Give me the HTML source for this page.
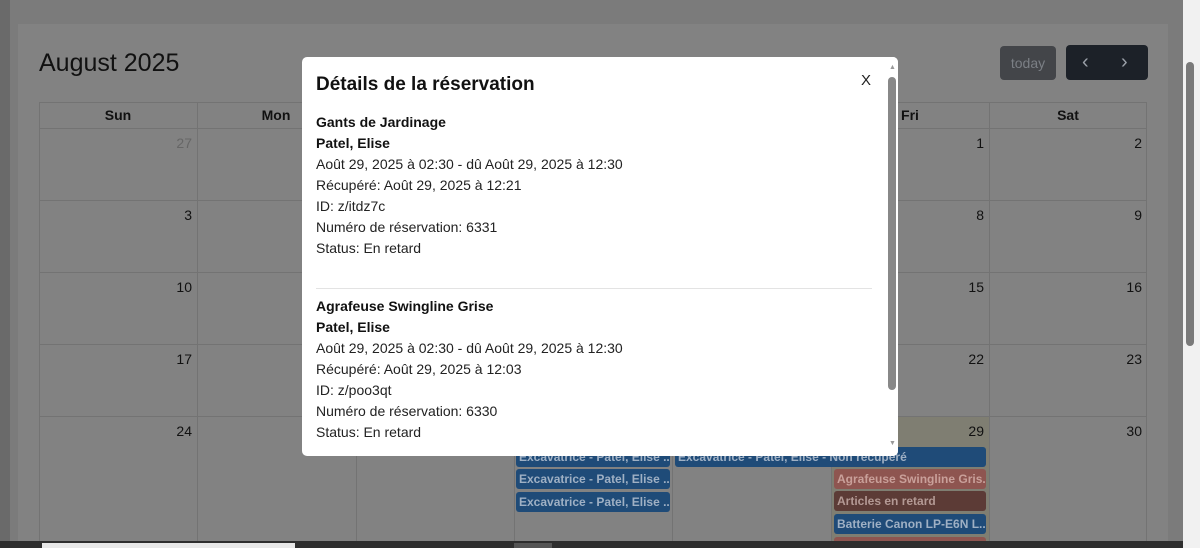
<!DOCTYPE html>
<html><head><meta charset="utf-8"><style>
*{box-sizing:border-box;margin:0;padding:0}
html,body{width:1200px;height:548px;overflow:hidden}
body{background:#7b7b7b;font-family:"Liberation Sans",sans-serif;position:relative}
.abs{position:absolute}
.card{left:18px;top:24px;width:1150px;height:524px;background:#828282}
.grid{left:39px;top:102px;width:1108px;height:446px;border:1px solid #737373}
.vl{position:absolute;top:102px;width:1px;height:446px;background:#737373}
.hl{position:absolute;left:39px;width:1108px;height:1px;background:#737373}
.dh{position:absolute;top:107px;font-size:14px;font-weight:bold;color:#111;text-align:center;width:158px}
.dn{position:absolute;font-size:14px;color:#111;text-align:right;width:150px}
.ev{position:absolute;height:20px;border-radius:3px;color:#9fb0c4;font-size:12px;font-weight:bold;line-height:20px;padding-left:3px;white-space:nowrap;overflow:hidden}
.modal{left:302px;top:57px;width:596px;height:399px;background:#fff;border-radius:5px;overflow:hidden}
.m{position:absolute;left:14px;font-size:14px;color:#222;line-height:21px}
.m b{color:#111}
</style></head><body>
<div class="abs" style="left:0;top:0;width:10px;height:548px;background:#6a6a6a"></div>
<div class="abs card"></div>
<div class="abs" style="left:39px;top:49px;font-size:25px;color:#111">August 2025</div>
<div class="abs" style="left:1000px;top:46px;width:56px;height:34px;background:#434549;border-radius:4px;color:#7b7f85;font-size:14px;line-height:34px;text-align:center">today</div>
<div class="abs" style="left:1066px;top:45px;width:82px;height:35px;background:#1c2128;border-radius:4px;color:#9aa0a8;font-size:20px;line-height:34px"><span class="abs" style="left:16px">‹</span><span class="abs" style="left:55px">›</span></div>
<div class="abs grid"></div>
<div class="vl" style="left:197px"></div><div class="vl" style="left:356px"></div><div class="vl" style="left:514px"></div><div class="vl" style="left:672px"></div><div class="vl" style="left:831px"></div><div class="vl" style="left:989px"></div>
<div class="hl" style="top:128px"></div><div class="hl" style="top:200px"></div><div class="hl" style="top:272px"></div><div class="hl" style="top:344px"></div><div class="hl" style="top:416px"></div>
<div class="abs" style="left:832px;top:417px;width:157px;height:131px;background:#7f7e72"></div>
<div class="dh" style="left:39px">Sun</div><div class="dh" style="left:197px">Mon</div><div class="dh" style="left:831px">Fri</div><div class="dh" style="left:989px">Sat</div>
<div class="dn" style="left:42px;top:135px;color:#666">27</div>
<div class="dn" style="left:42px;top:207px">3</div><div class="dn" style="left:42px;top:279px">10</div><div class="dn" style="left:42px;top:351px">17</div><div class="dn" style="left:42px;top:423px">24</div>
<div class="dn" style="left:834px;top:135px">1</div><div class="dn" style="left:834px;top:207px">8</div><div class="dn" style="left:834px;top:279px">15</div><div class="dn" style="left:834px;top:351px">22</div><div class="dn" style="left:834px;top:423px">29</div>
<div class="dn" style="left:992px;top:135px">2</div><div class="dn" style="left:992px;top:207px">9</div><div class="dn" style="left:992px;top:279px">16</div><div class="dn" style="left:992px;top:351px">23</div><div class="dn" style="left:992px;top:423px">30</div>
<div class="ev" style="left:516px;top:447px;width:154px;background:#1f4b78">Excavatrice - Patel, Elise ...</div>
<div class="ev" style="left:516px;top:469px;width:154px;background:#1f4b78">Excavatrice - Patel, Elise ...</div>
<div class="ev" style="left:516px;top:492px;width:154px;background:#1f4b78">Excavatrice - Patel, Elise ...</div>
<div class="ev" style="left:675px;top:447px;width:311px;background:#1f4b78">Excavatrice - Patel, Elise - Non récupéré</div>
<div class="ev" style="left:834px;top:469px;width:152px;background:#8e5550;color:#c9a09a">Agrafeuse Swingline Gris...</div>
<div class="ev" style="left:834px;top:491px;width:152px;background:#5c3b36;color:#b39994">Articles en retard</div>
<div class="ev" style="left:834px;top:514px;width:152px;background:#1f4b78">Batterie Canon LP-E6N L...</div>
<div class="ev" style="left:834px;top:537px;width:152px;background:#8e5550"></div>
<div class="abs" style="left:1183px;top:0;width:17px;height:548px;background:#f1f1f1"></div>
<div class="abs" style="left:1186px;top:62px;width:8px;height:284px;background:#7a7a7a;border-radius:4px"></div>
<div class="abs" style="left:0;top:541px;width:1183px;height:7px;background:#2e2e2e"></div>
<div class="abs" style="left:42px;top:543px;width:253px;height:5px;background:#e8e8e8"></div>
<div class="abs" style="left:514px;top:543px;width:38px;height:5px;background:#555"></div>
<div class="abs modal">
<div class="abs" style="left:14px;top:17px;font-size:19px;font-weight:bold;color:#111">Détails de la réservation</div>
<div class="abs" style="left:559px;top:15px;font-size:15px;color:#222">X</div>
<div class="abs" style="left:585px;top:0;width:11px;height:399px;background:#fff"></div>
<div class="abs" style="left:586px;top:20px;width:8px;height:313px;background:#888;border-radius:4px"></div>
<div class="abs" style="left:587px;top:7px;font-size:7px;color:#999">▲</div>
<div class="abs" style="left:587px;top:383px;font-size:7px;color:#999">▼</div>
<div class="m" style="top:55px"><b>Gants de Jardinage</b><br><b>Patel, Elise</b><br>Août 29, 2025 à 02:30 - dû Août 29, 2025 à 12:30<br>Récupéré: Août 29, 2025 à 12:21<br>ID: z/itdz7c<br>Numéro de réservation: 6331<br>Status: En retard</div>
<div class="abs" style="left:14px;top:231px;width:556px;height:1px;background:#e3e3e3"></div>
<div class="m" style="top:239px"><b>Agrafeuse Swingline Grise</b><br><b>Patel, Elise</b><br>Août 29, 2025 à 02:30 - dû Août 29, 2025 à 12:30<br>Récupéré: Août 29, 2025 à 12:03<br>ID: z/poo3qt<br>Numéro de réservation: 6330<br>Status: En retard</div>
</div>
</body></html>
